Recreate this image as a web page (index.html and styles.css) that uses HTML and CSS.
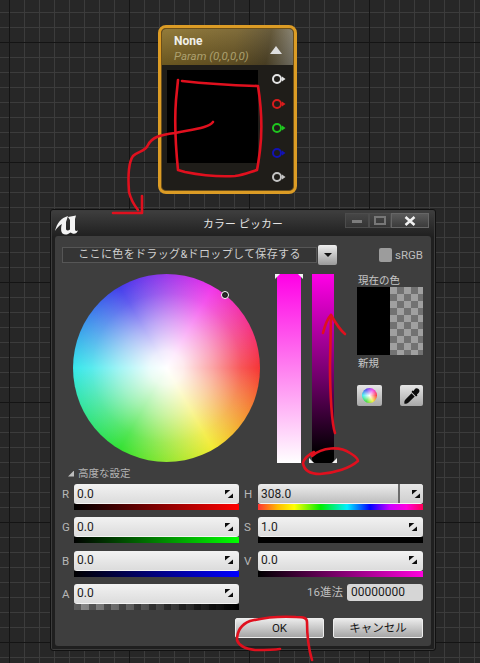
FILE: index.html
```html
<!DOCTYPE html>
<html lang="ja">
<head>
<meta charset="utf-8">
<title>カラー ピッカー</title>
<link rel="stylesheet" href="styles.css">
</head>
<body>
<div class="canvas">
  <section class="node">
    <header class="node-head">
      <div class="node-titles">
        <div class="node-name">None</div>
        <div class="node-sub">Param (0,0,0,0)</div>
      </div>
      <span class="node-tri"></span>
    </header>
    <div class="node-body">
      <div class="node-preview"></div>
      <div class="pins">
        <svg class="pin pin-white" viewBox="0 0 16 12"><circle cx="6" cy="6" r="4"/><path d="M11 3.500 14.500 6 11 8.500Z"/></svg>
        <svg class="pin pin-red" viewBox="0 0 16 12"><circle cx="6" cy="6" r="4"/><path d="M11 3.500 14.500 6 11 8.500Z"/></svg>
        <svg class="pin pin-green" viewBox="0 0 16 12"><circle cx="6" cy="6" r="4"/><path d="M11 3.500 14.500 6 11 8.500Z"/></svg>
        <svg class="pin pin-blue" viewBox="0 0 16 12"><circle cx="6" cy="6" r="4"/><path d="M11 3.500 14.500 6 11 8.500Z"/></svg>
        <svg class="pin pin-gray" viewBox="0 0 16 12"><circle cx="6" cy="6" r="4"/><path d="M11 3.500 14.500 6 11 8.500Z"/></svg>
      </div>
    </div>
  </section>

  <section class="window">
    <header class="titlebar">
      <svg class="logo" viewBox="0 0 40 32"><path d="M5 23C7 15 11 10 18 8L16 14V21C16 22.500 18 23 20 21.500V12L18 9 26 7.500 25 11V21C25 23 26 23.500 28 22.500 27 25 25 26.500 22.500 25.500L20.500 24.500C18 26.500 15 27.500 12.500 25.500 10.500 23.500 11 18 12 16 9 17.500 7 20 5 23Z"/></svg>
      <div class="title">カラー ピッカー</div>
      <div class="win-btns">
        <span class="win-btn win-min"><i class="glyph-min"></i></span>
        <span class="win-btn win-max"><i class="glyph-max"></i></span>
        <span class="win-btn win-close">
          <svg class="glyph-x" viewBox="0 0 12 10"><path d="M1.500 1 10.500 9M10.500 1 1.500 9"/></svg>
        </span>
      </div>
    </header>

    <div class="panel">
      <div class="toprow">
        <div class="dropzone">ここに色をドラッグ&amp;ドロップして保存する</div>
        <span class="dropbtn"><i class="dropbtn-tri"></i></span>
        <span class="srgb"><i class="checkbox"></i>sRGB</span>
      </div>

      <div class="main">
        <div class="wheel"><i class="wheel-mark"></i></div>
        <div class="bar bar-sat"><i class="tick tick-tl"></i><i class="tick tick-tr"></i></div>
        <div class="bar bar-val"><i class="tick tick-bl"></i><i class="tick tick-br"></i></div>
        <div class="preview">
          <div class="preview-label">現在の色</div>
          <div class="swatches">
            <div class="swatch swatch-black"></div>
            <div class="swatch swatch-alpha"></div>
          </div>
          <div class="preview-label preview-new">新規</div>
          <div class="tools">
            <span class="tool"><i class="tool-wheel"></i></span>
            <span class="tool tool-drop">
              <svg class="dropper" viewBox="0 0 20 20"><path d="M13 2.500C14 1 16 1 17.300 2.300 18.800 3.800 18.500 5.700 17 7L15.500 8.200 16 9.500 14.500 10.500 9.500 5.500 10.500 4 11.800 4.500ZM9.500 7 13 10.500 6.500 17C5.500 18 4.500 18.300 3.500 18.500L1.500 18.500 1.500 16.500C1.700 15.500 2 14.500 3 13.500Z"/></svg>
            </span>
          </div>
        </div>
      </div>

      <div class="advanced"><i class="adv-tri"></i>高度な設定</div>

      <div class="sliders">
        <div class="ctrl ctrl-l"><span class="ctrl-label">R</span><div class="field"><div class="input"><span>0.0</span><svg class="spin" viewBox="0 0 9 9"><path d="M0 0H6L0 5ZM9 9H3L9 4Z"/></svg></div><div class="strip strip-r"></div></div></div>
        <div class="ctrl ctrl-r"><span class="ctrl-label">H</span><div class="field"><div class="input input-h"><span>308.0</span><b class="h-end"><svg class="spin" viewBox="0 0 9 9"><path d="M0 0H6L0 5ZM9 9H3L9 4Z"/></svg></b></div><div class="strip strip-h"></div></div></div>
        <div class="ctrl ctrl-l"><span class="ctrl-label">G</span><div class="field"><div class="input"><span>0.0</span><svg class="spin" viewBox="0 0 9 9"><path d="M0 0H6L0 5ZM9 9H3L9 4Z"/></svg></div><div class="strip strip-g"></div></div></div>
        <div class="ctrl ctrl-r"><span class="ctrl-label">S</span><div class="field"><div class="input"><span>1.0</span><svg class="spin" viewBox="0 0 9 9"><path d="M0 0H6L0 5ZM9 9H3L9 4Z"/></svg></div><div class="strip strip-s"></div></div></div>
        <div class="ctrl ctrl-l"><span class="ctrl-label">B</span><div class="field"><div class="input"><span>0.0</span><svg class="spin" viewBox="0 0 9 9"><path d="M0 0H6L0 5ZM9 9H3L9 4Z"/></svg></div><div class="strip strip-b"></div></div></div>
        <div class="ctrl ctrl-r"><span class="ctrl-label">V</span><div class="field"><div class="input"><span>0.0</span><svg class="spin" viewBox="0 0 9 9"><path d="M0 0H6L0 5ZM9 9H3L9 4Z"/></svg></div><div class="strip strip-v"></div></div></div>
        <div class="ctrl ctrl-l"><span class="ctrl-label">A</span><div class="field"><div class="input"><span>0.0</span><svg class="spin" viewBox="0 0 9 9"><path d="M0 0H6L0 5ZM9 9H3L9 4Z"/></svg></div><div class="strip strip-a"></div></div></div>
        <div class="hexrow"><span class="hex-label">16進法</span><div class="hex-input">00000000</div></div>
      </div>

      <div class="actions">
        <button class="btn btn-ok">OK</button>
        <button class="btn btn-cancel">キャンセル</button>
      </div>
    </div>
  </section>

  <svg class="scribbles" viewBox="0 0 480 663">
    <path d="M182 81C200 83 225 85 258 86 261 105 263 125 260 150 259 158 258 165 257 170 250 172 244 175 235 176 218 177 200 175 185 172L178 170C176 150 174 125 176 100L178 80"/>
    <path d="M213 122C208 128 195 129 175 133 160 135 152 137 148 145 145 152 138 151 133 156 128 163 128 178 129 192 131 200 134 205 138 210"/>
    <path d="M142 196V213L113 213"/>
    <path d="M335 433C332 425 330 395 330 365L331 315"/>
    <path d="M323 333C325 325 328 318 331 315 335 322 340 330 345 334"/>
    <path d="M312 456C322 447 340 446 350 453 355 456 358 459 358 461 350 468 335 473 320 474 310 474 304 470 303 463 304 458 308 455 314 452"/>
    <path d="M312 660C309 650 307 640 307 622 307 618 304 617 296 617 280 616 262 618 250 621 240 625 237 632 237 640 239 646 246 649 255 650 265 650 273 650 280 649"/>
  </svg>
</div>
</body>
</html>
```

FILE: styles.css
```css
* { box-sizing: border-box; }
html, body { margin: 0; padding: 0; }
body { width: 480px; height: 663px; overflow: hidden; font-family: "Roboto", "Noto Sans CJK JP", sans-serif; }
i, b { display: block; }

.canvas {
  position: relative;
  width: 480px;
  height: 663px;
  background-color: #272727;
  background-image:
    linear-gradient(to right, #141414 1px, transparent 1px),
    linear-gradient(to bottom, #141414 1px, transparent 1px),
    linear-gradient(to right, #3c3c3c 1px, transparent 1px),
    linear-gradient(to bottom, #3c3c3c 1px, transparent 1px);
  background-size: 120px 120px, 120px 120px, 15px 15px, 15px 15px;
  background-position: 9px 0, 0 42px, 9px 0, 0 12px;
}

/* Material node */
.node {
  position: absolute;
  left: 158px;
  top: 25px;
  width: 139px;
  height: 169px;
  border: 3px solid #dc9c25;
  border-radius: 8px;
  background: #1f1d19;
  box-shadow: inset 0 0 0 1px #6b4f1a;
  padding: 1px;
  display: flex;
  flex-direction: column;
}
.node-head {
  height: 36px;
  flex: none;
  display: flex;
  align-items: flex-start;
  justify-content: space-between;
  padding: 5px 11px 0 12px;
  border-radius: 4px 4px 0 0;
  background:
    linear-gradient(to bottom, rgba(255,255,255,.08), rgba(0,0,0,.22)),
    linear-gradient(100deg, #8a7029 0%, #75602a 55%, #5a4d2c 80%, #8a8678 100%);
}
.node-name { font: bold 12px/14px "Roboto", sans-serif; color: #f1f0ea; }
.node-sub { font: italic 11.500px/16px "Roboto", sans-serif; color: #aca06e; white-space: nowrap; }
.node-tri {
  margin-top: 12px;
  width: 0; height: 0;
  border-left: 6px solid transparent;
  border-right: 6px solid transparent;
  border-bottom: 8px solid #dedede;
}
.node-body { flex: 1; display: flex; padding-top: 5px; }
.node-preview { width: 91px; height: 93px; margin-left: 5px; background: #000; }
.pins {
  margin-left: 13px;
  display: flex;
  flex-direction: column;
  gap: 12.500px;
  padding-top: 3px;
}
.pin { width: 16px; height: 12px; fill: none; stroke-width: 2px; display: block; }
.pin path { stroke: none; }
.pin-white { stroke: #e4e4e4; } .pin-white path { fill: #e4e4e4; }
.pin-red { stroke: #d81c1c; } .pin-red path { fill: #d81c1c; }
.pin-green { stroke: #1fc61f; } .pin-green path { fill: #1fc61f; }
.pin-blue { stroke: #1212b4; } .pin-blue path { fill: #1212b4; }
.pin-gray { stroke: #c4c4c4; } .pin-gray path { fill: #c4c4c4; }

/* Colour picker window */
.window {
  position: absolute;
  left: 50px;
  top: 209px;
  width: 386px;
  height: 442px;
  border: 1px solid #111;
  background: linear-gradient(to bottom, #3f3f3f, #1f1f1f 27px, #1f1f1f);
  box-shadow: inset 0 0 0 1px #3c3c3c;
  border-radius: 3px;
  padding: 0 4px 4px;
  display: flex;
  flex-direction: column;
}
.titlebar {
  height: 26px;
  flex: none;
  position: relative;
  display: flex;
  align-items: center;
  justify-content: center;
}
.logo { position: absolute; left: -5px; top: -2px; width: 40px; height: 32px; fill: #f4f4f4; }
.title { font-size: 10.800px; color: #e4e4e4; letter-spacing: .2px; }
.win-btns { position: absolute; right: 2px; top: 3px; display: flex; }
.win-btn {
  height: 15px;
  display: flex;
  align-items: center;
  justify-content: center;
  border: 1px solid #4c4c4c;
  background: linear-gradient(to bottom, #464646, #353535);
}
.win-min { width: 24px; }
.win-max { width: 22px; }
.win-close { width: 38px; background: linear-gradient(to bottom, #5a5a5a, #3b3b3b); border-color: #666; }
.glyph-min { width: 10px; height: 3px; background: #7d7d7d; margin-top: 2px; }
.glyph-max { width: 12px; height: 9px; border: 2px solid #777; }
.glyph-x { width: 12px; height: 10px; fill: none; stroke: #f2f2f2; stroke-width: 2.500px; }

.panel {
  flex: 1;
  background: #3e3e3e;
  border-radius: 3px;
  padding: 9px 7px 0;
  display: flex;
  flex-direction: column;
}
.toprow { display: flex; align-items: center; height: 20px; }
.dropzone {
  width: 255px;
  height: 16px;
  border: 1px solid #565656;
  background: #353535;
  color: #cfcfcf;
  font-size: 11px;
  letter-spacing: .35px;
  line-height: 14px;
  text-align: center;
}
.dropbtn {
  width: 19px;
  height: 20px;
  margin-left: 1px;
  border-radius: 2px;
  background: linear-gradient(to bottom, #efefef, #9a9a9a);
  display: flex;
  align-items: center;
  justify-content: center;
}
.dropbtn-tri {
  width: 0; height: 0;
  border-left: 4px solid transparent;
  border-right: 4px solid transparent;
  border-top: 4px solid #111;
}
.srgb {
  margin-left: 42px;
  display: flex;
  align-items: center;
  color: #bdbdbd;
  font-size: 11.500px;
  gap: 3px;
}
.checkbox { width: 13px; height: 14px; background: #9c9c9c; border-radius: 2px; }

.main { display: flex; height: 189px; margin-top: 9px; }
.wheel {
  position: relative;
  width: 187px;
  height: 188px;
  margin-left: 11px;
  border-radius: 50%;
  background:
    radial-gradient(circle closest-side, #fff 0%, rgba(255,255,255,.9) 18%, rgba(255,255,255,.56) 50%, rgba(255,255,255,.2) 80%, rgba(255,255,255,.04) 100%),
    conic-gradient(from 90deg, #f52d2d 0deg, #f2ea2a 60deg, #2be02b 120deg, #2fe6ea 180deg, #3d35ea 240deg, #f02ce8 300deg, #f52d2d 360deg);
}
.wheel-mark {
  position: absolute;
  left: 148px;
  top: 17px;
  width: 8px;
  height: 8px;
  border-radius: 50%;
  border: 1px solid #fff;
  background: #2a2a2a;
  box-shadow: inset 0 0 0 1px #111;
}
.bar { position: relative; height: 189px; }
.bar-sat { width: 24px; margin-left: 17px; background: linear-gradient(to bottom, #ff00e6, #ff80f0 50%, #fff); }
.bar-val { width: 22px; margin-left: 11px; background: linear-gradient(to bottom, #ff00e6, #70006a 55%, #000 95%); border-radius: 0 0 4px 4px; }
.tick { position: absolute; width: 5px; height: 5px; background: #f2f2f2; }
.tick-tl { left: -2px; top: 0; clip-path: polygon(0 0, 100% 0, 0 100%); }
.tick-tr { right: -2px; top: 0; clip-path: polygon(0 0, 100% 0, 100% 100%); }
.tick-bl { left: -3px; bottom: 0; clip-path: polygon(0 0, 100% 100%, 0 100%); }
.tick-br { right: -3px; bottom: 0; clip-path: polygon(100% 0, 100% 100%, 0 100%); }

.preview { width: 66px; margin-left: 23px; display: flex; flex-direction: column; }
.preview-label { color: #c6c6c6; font-size: 10.500px; line-height: 13px; height: 13px; white-space: nowrap; padding-left: 1px; }
.swatches { display: flex; height: 68px; }
.swatch { flex: 1; }
.swatch-black { background: #000; }
.swatch-alpha {
  background-color: #a0a0a0;
  background-image: conic-gradient(#727272 25%, transparent 0 50%, #727272 0 75%, transparent 0);
  background-size: 14px 14px;
}
.preview-new { margin-top: 1px; height: 16px; line-height: 16px; }
.tools { display: flex; justify-content: space-between; margin-top: 13px; }
.tool {
  width: 25px;
  height: 21px;
  border-radius: 2px;
  background: linear-gradient(to bottom, #e6e6e6, #a8a8a8);
  display: flex;
  align-items: center;
  justify-content: center;
}
.tool-drop { width: 23px; }
.tool-wheel {
  width: 15px;
  height: 15px;
  border-radius: 50%;
  background:
    radial-gradient(circle closest-side, #fff 0%, rgba(255,255,255,.4) 60%, rgba(255,255,255,0) 100%),
    conic-gradient(from 90deg, #f33, #ee3, #3d3, #3ee, #44e, #e3e, #f33);
}
.dropper { width: 18px; height: 18px; fill: #0c0c0c; }

.advanced {
  display: flex;
  align-items: center;
  gap: 4px;
  height: 13px;
  margin-top: 4px;
  margin-left: 6px;
  color: #b4b4b4;
  font-size: 10.500px;
  line-height: 13px;
}
.adv-tri { width: 6px; height: 6px; background: #bdbdbd; clip-path: polygon(100% 0, 100% 100%, 0 100%); }

.sliders {
  display: grid;
  grid-template-columns: 177px 184px;
  grid-auto-rows: 26px;
  row-gap: 7.300px;
  margin-top: 4px;
}
.ctrl { display: flex; }
.ctrl-label { color: #b6b6b6; font-size: 11.500px; line-height: 20px; flex: none; }
.ctrl-l .ctrl-label { width: 12px; }
.ctrl-r .ctrl-label { width: 19px; padding-left: 5px; }
.field { width: 165px; }
.input {
  height: 20px;
  display: flex;
  align-items: center;
  justify-content: space-between;
  padding: 0 3px;
  border-radius: 3px;
  background: linear-gradient(to bottom, #f2f2f2, #dcdcdc);
  color: #1c1c1c;
  font-size: 12px;
  border-bottom: 1px solid #f5f5f5;
}
.spin { width: 8px; height: 8px; fill: #0d0d0d; flex: none; margin-right: 3px; }
.input-h { padding-right: 0; background: linear-gradient(to bottom, #ededed, #bebebe); }
.h-end {
  width: 25px;
  height: 19px;
  border-radius: 0 3px 3px 0;
  display: flex;
  align-items: center;
  justify-content: flex-end;
  background: linear-gradient(to bottom, #e6e6e6, #cfcfcf);
  border-left: 2px solid #6b6b6b;
}
.strip { height: 6px; }
.strip-r { background: linear-gradient(to right, #000, #f00); }
.strip-g { background: linear-gradient(to right, #000, #0f0); }
.strip-b { background: linear-gradient(to right, #000, #00f); }
.strip-h { background: linear-gradient(to right, #f33 0%, #fb0 12%, #ff0 22%, #0e0 38%, #0ef 54%, #00f 68%, #c0f 80%, #f0d 90%, #f05 100%); }
.strip-s { background: #000; }
.strip-v { background: linear-gradient(to right, #000, #f0d); }
.strip-a {
  background-color: #000;
  background-image:
    linear-gradient(to right, rgba(0,0,0,0) 0%, #000 100%),
    conic-gradient(#8d8d8d 25%, #5c5c5c 0 50%, #8d8d8d 0 75%, #5c5c5c 0);
  background-size: 100% 100%, 15px 12px;
}
.hexrow { display: flex; align-items: flex-start; justify-content: flex-end; gap: 4px; }
.hex-label { color: #bdbdbd; font-size: 11.500px; line-height: 17px; }
.hex-input {
  width: 76px;
  height: 17px;
  border-radius: 3px;
  background: #d6d6d6;
  color: #1c1c1c;
  font-size: 12px;
  line-height: 17px;
  padding-left: 4px;
}

.actions { display: flex; justify-content: flex-end; gap: 9px; margin-top: 8px; padding-right: 1px; }
.btn {
  height: 20px;
  border: 1px solid #ededed;
  border-radius: 2px;
  background: linear-gradient(to bottom, #eaeaea, #a6a6a6);
  color: #161616;
  font: 400 11.500px/16px "Roboto", "Noto Sans CJK JP", sans-serif;
  padding: 0;
}
.btn-ok { width: 89px; }
.btn-cancel { width: 90px; }

.scribbles {
  position: absolute;
  left: 0;
  top: 0;
  width: 480px;
  height: 663px;
  fill: none;
  stroke: #e0101e;
  stroke-width: 2.600px;
  stroke-linecap: round;
  stroke-linejoin: round;
}
```
